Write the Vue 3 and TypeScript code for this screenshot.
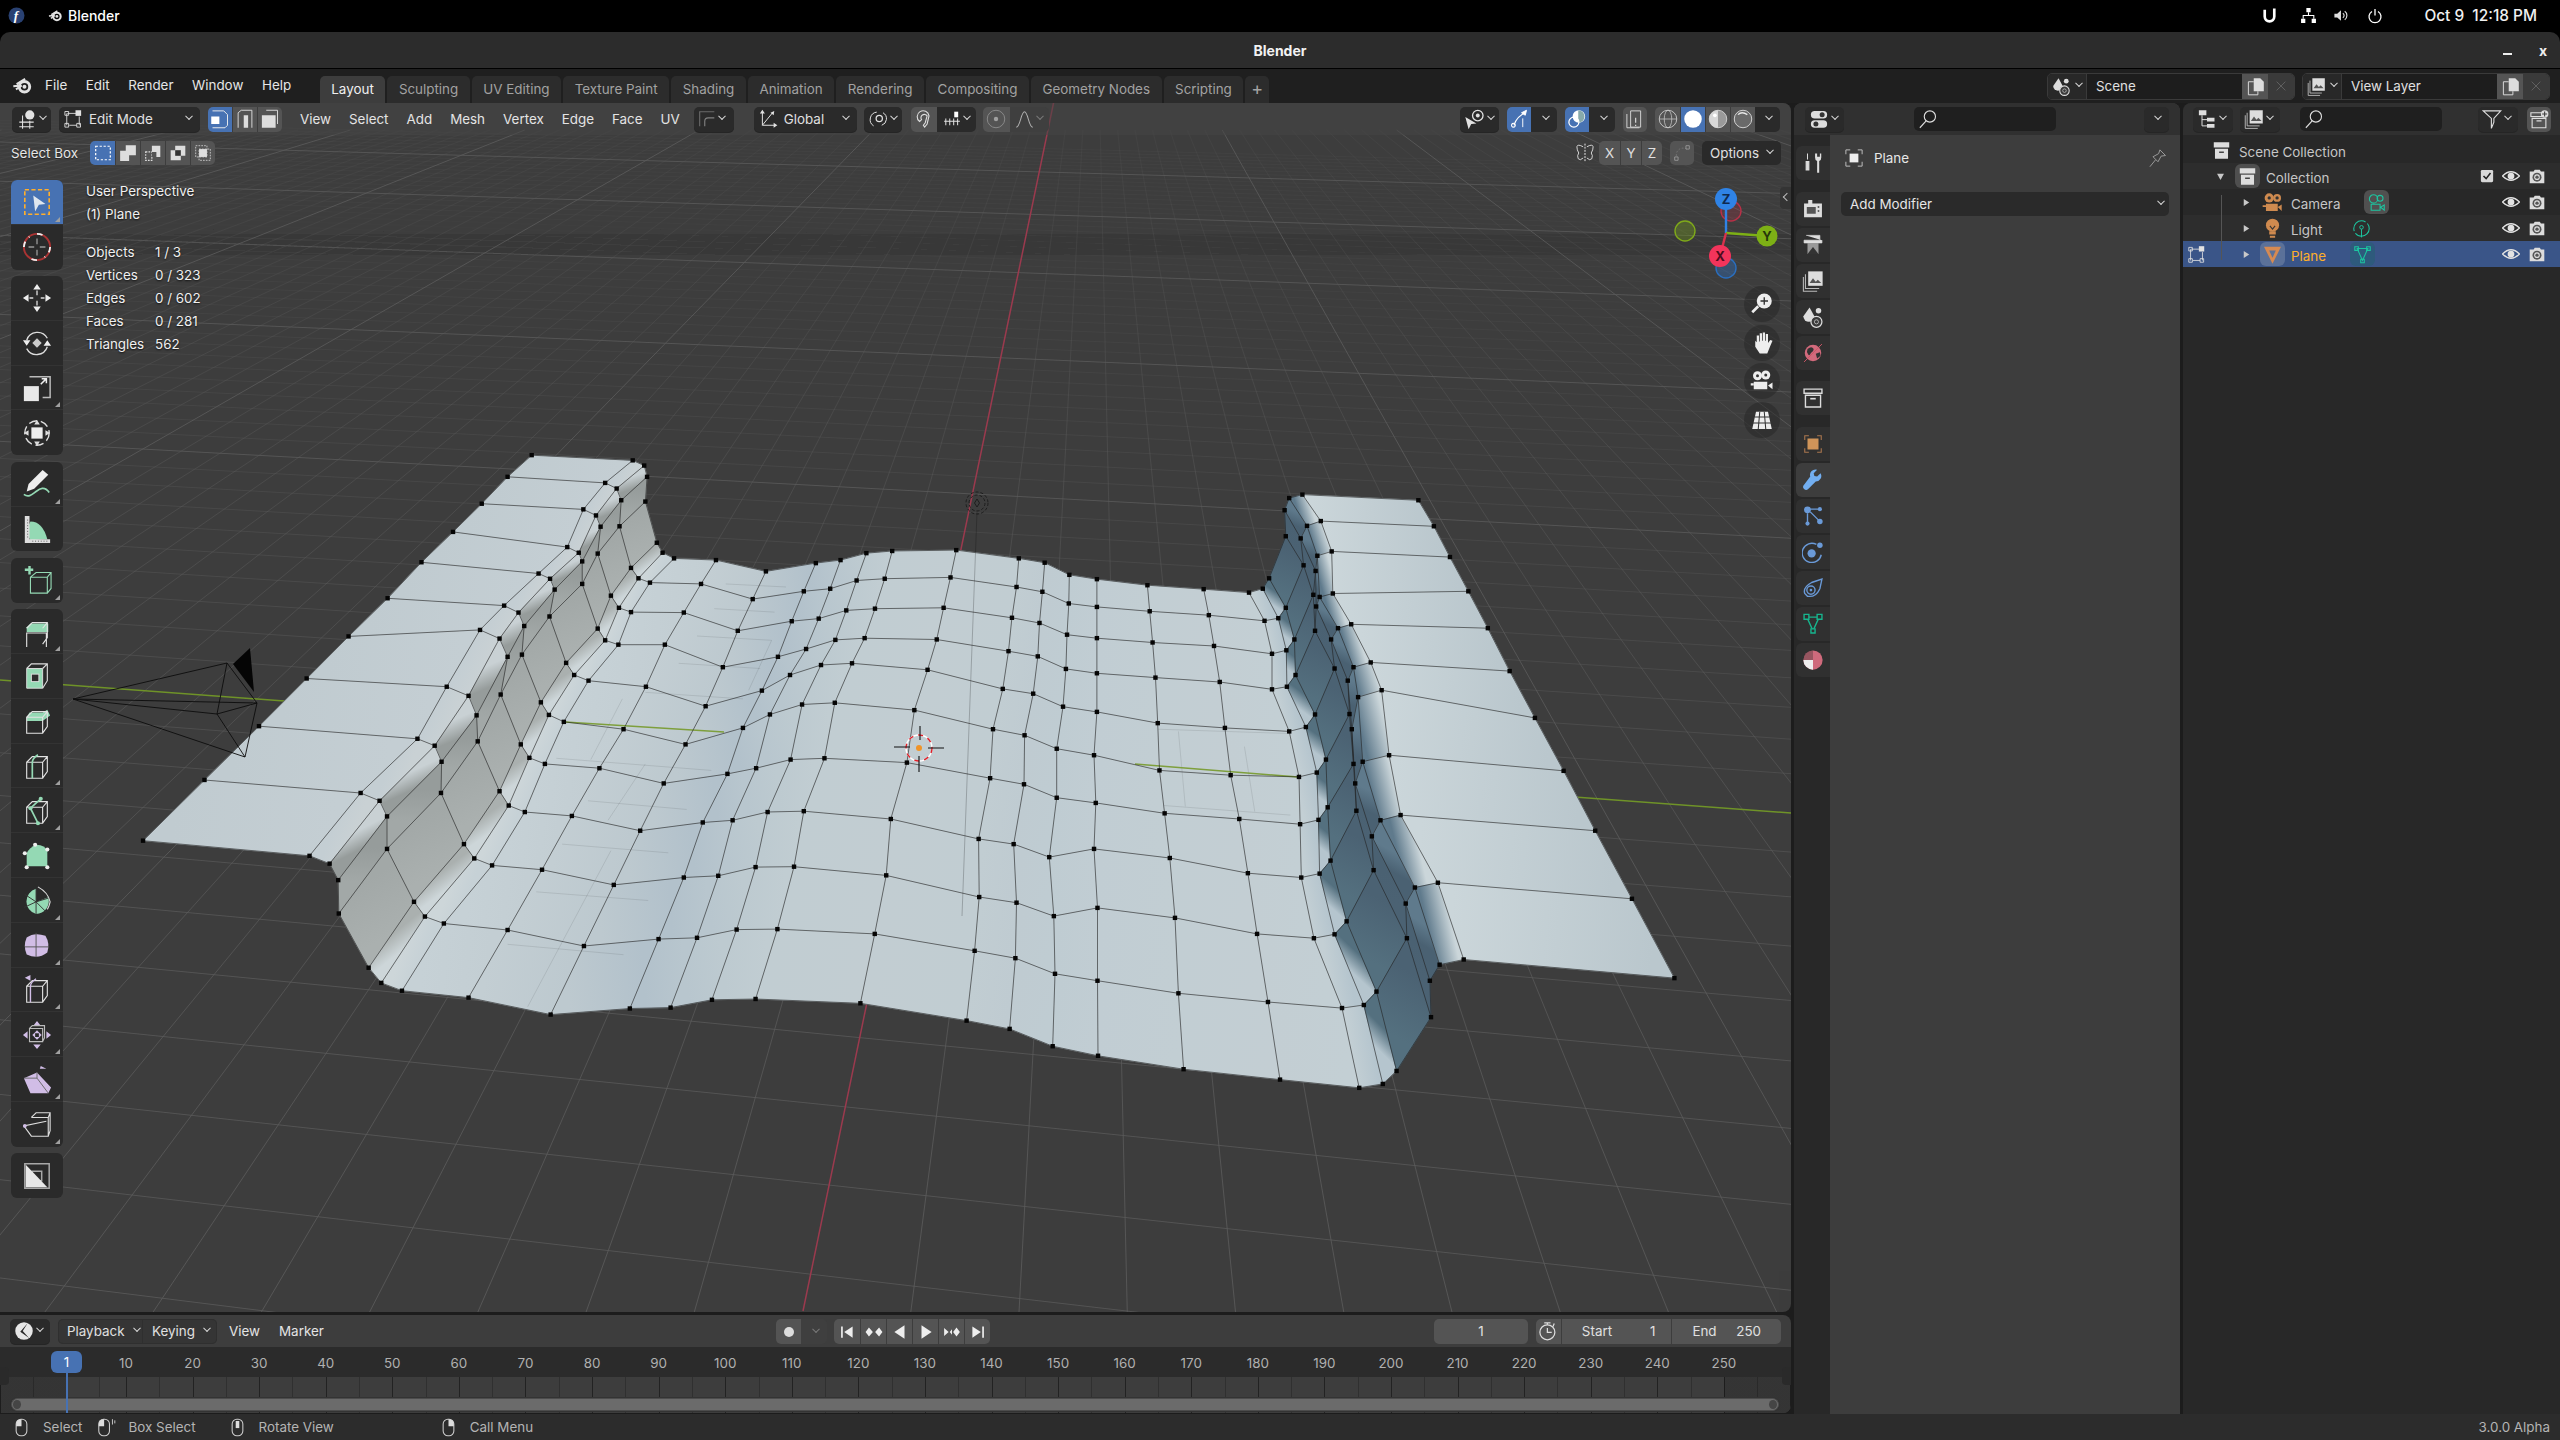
<script setup lang="ts">
import { h } from 'vue'

type P = { n: string; s?: number }

const W = '#e2e2e2'
const G = '#94d9b4'
const V = '#d1bde6'
const wire = (c = W) => `<path d="M5 12h17v17H5zM5 12l6-6h16v16l-5 7M22 12l5-6" fill="none" stroke="${c}" stroke-width="1.2"/>`

const icons: Record<string, string> = {
  fedora: `<circle cx="16" cy="16" r="15" fill="#294172"/><text x="11" y="25" font-family="Liberation Serif" font-style="italic" font-weight="700" font-size="25" fill="#fff">f</text>`,
  blender: `<circle cx="19" cy="18" r="8" fill="none" stroke="${W}" stroke-width="4.5"/><circle cx="19" cy="18" r="3" fill="${W}"/><path d="M2 17l11-1M6 22l9-6M20 6L7 14" stroke="${W}" stroke-width="3"/>`,
  ubi: `<path d="M7 5v13a9 9 0 0 0 18 0V3" fill="none" stroke="#fff" stroke-width="5"/>`,
  net: `<path d="M12 2h8v8h-8zM2 22h8v8H2zM22 22h8v8h-8z" fill="#fff"/><path d="M16 10v6M6 22v-6h20v6" stroke="#fff" stroke-width="2" fill="none"/>`,
  vol: `<path d="M3 12h6l8-7v22l-8-7H3z" fill="#ddd"/><path d="M21 11a6 6 0 0 1 0 10M25 7a11 11 0 0 1 0 18" fill="none" stroke="#ddd" stroke-width="2.5"/>`,
  power: `<path d="M10 7a12 12 0 1 0 12 0" fill="none" stroke="#fff" stroke-width="2.6"/><path d="M16 2v13" stroke="#fff" stroke-width="2.6"/>`,
  view3d: `<circle cx="21" cy="9" r="7" fill="${W}"/><path d="M10 10v20M5 20h22M5 27h22M21 18v12" stroke="${W}" stroke-width="1.6" fill="none"/>`,
  editmode: `<rect x="20" y="2" width="9" height="9" fill="${W}"/><path d="M7 7h14M6 7v19M26 12v14M10 26h12" stroke="${W}" stroke-width="1.4"/><path d="M3 4h6v6H3zM3 23h6v6H3zM22 23h6v6h-6z" fill="none" stroke="${W}" stroke-width="1.4"/>`,
  svert: `<path d="M4 3h18l6 6v17l-4 4H4" fill="none" stroke="#eee" stroke-width="1.5"/><rect x="2" y="12" width="13" height="12" fill="#fff"/>`,
  sedge: `<path d="M5 30V6l5-4h17v28" fill="none" stroke="#ddd" stroke-width="1.5"/><rect x="14" y="10" width="7" height="20" fill="#ddd"/>`,
  sface: `<path d="M10 2h18v22" fill="none" stroke="#ddd" stroke-width="1.5"/><path d="M3 10h22v20H3z" fill="#ddd"/>`,
  uv: `<path d="M3 29V3h26" fill="none" stroke="#6a6a6a" stroke-width="2"/><path d="M12 29V20q0-6 6-6h11" fill="none" stroke="#808080" stroke-width="2"/>`,
  global: `<path d="M7 4v22h20M7 26L24 5" fill="none" stroke="${W}" stroke-width="1.6"/><path d="M7 1l4 6H3zM31 26l-6 4v-8zM26 3l-1 7-5-4z" fill="${W}"/>`,
  pivot: `<circle cx="18" cy="15" r="5" fill="none" stroke="${W}" stroke-width="2"/><path d="M24 6a11 11 0 0 1-2 20M9 27A12 12 0 0 1 14 5" fill="none" stroke="${W}" stroke-width="1.6"/>`,
  snap: `<path d="M9 20A9.5 9.5 0 1 1 24 11L21 24l-4 5-2-3 3-4 3-11a5 5 0 1 0-9 6z" fill="none" stroke="#ddd" stroke-width="1.8"/>`,
  snapinc: `<rect x="20" y="3" width="7" height="10" fill="#fff"/><path d="M2 20h28M5 15v12M12 15v12M19 15v12M26 15v12" stroke="${W}" stroke-width="1.8"/>`,
  prop: `<circle cx="16" cy="16" r="14" fill="none" stroke="#8c8c8c" stroke-width="1.5"/><circle cx="16" cy="16" r="3.5" fill="#a0a0a0"/>`,
  fall: `<path d="M2 29C9 29 10 3 16 3s7 26 14 26" fill="none" stroke="#b0b0b0" stroke-width="1.7"/>`,
  selset: `<path d="M3 4h26v24H3z" fill="none" stroke="#fff" stroke-width="2.2" stroke-dasharray="4 3"/>`,
  selext: `<path d="M12 2h18v18H18v10H2V12h10z" fill="#ddd"/>`,
  selsub: `<path d="M3 14h11v15H3z" fill="none" stroke="#ddd" stroke-width="2" stroke-dasharray="3 2"/><path d="M14 3h15v20H14z" fill="#ddd"/><path d="M14 14h8v9h-8z" fill="#545454"/>`,
  seldif: `<path d="M11 3h18v18H11zM3 11h18v18H3z" fill="#ddd"/><rect x="11" y="11" width="10" height="10" fill="#333"/>`,
  selint: `<path d="M3 3h20v20H3zM9 9h20v20H9z" fill="none" stroke="#ccc" stroke-width="1.6" stroke-dasharray="3 2"/><rect x="9" y="9" width="14" height="14" fill="#ddd"/>`,
  view: `<circle cx="21" cy="10" r="8" fill="none" stroke="${W}" stroke-width="2"/><circle cx="21" cy="10" r="3" fill="${W}"/><path d="M2 12l5 19 4-8 8-1z" fill="${W}"/>`,
  gizmo: `<path d="M8 26Q12 12 26 6M7 23a3 3 0 1 0 .1 0" fill="none" stroke="#fff" stroke-width="1.8"/><path d="M28 2l-2 8-6-4zM22 15v14" stroke="#fff" fill="#fff" stroke-width="1.5"/>`,
  overlay: `<circle cx="19" cy="12" r="10" fill="#fff"/><path d="M18 2a10 10 0 0 1 0 20z" fill="#8aa"/><circle cx="11" cy="21" r="8" fill="none" stroke="#fff" stroke-width="2"/>`,
  xray: `<path d="M9 3h16v26H9z" fill="none" stroke="#d0d0d0" stroke-width="1.6"/><path d="M3 8v22h20" fill="none" stroke="#d0d0d0" stroke-width="1.6"/><path d="M17 14v8M17 25v2" stroke="#d0d0d0" stroke-width="2"/>`,
  wire: `<circle cx="16" cy="16" r="14" fill="none" stroke="#c8c8c8" stroke-width="1.5"/><ellipse cx="16" cy="16" rx="6" ry="14" fill="none" stroke="#c8c8c8" stroke-width="1.2"/><path d="M2 16h28" stroke="#c8c8c8" stroke-width="1.2"/>`,
  solid: `<circle cx="16" cy="16" r="14" fill="#fff"/>`,
  matprev: `<circle cx="16" cy="16" r="14" fill="#9a9a9a" stroke="#d0d0d0" stroke-width="1.5"/><path d="M16 2a14 14 0 0 0 0 28z" fill="#d8d8d8"/><circle cx="11" cy="10" r="3" fill="#fff"/>`,
  render: `<circle cx="16" cy="16" r="14" fill="#6a6a6a" stroke="#d8d8d8" stroke-width="1.5"/><path d="M8 9q6-6 15 0" fill="none" stroke="#e8e8e8" stroke-width="2"/>`,
  mirror: `<path d="M16 1v30" stroke="#e8e8e8" stroke-dasharray="3 2" stroke-width="1.6"/><path d="M13 6Q4 1 3 6q0 5 3 10-3 4-1 9 3 4 8-1M19 6q9-5 10 0 0 5-3 10 3 4 1 9-3 4-8-1" fill="none" stroke="#ddd" stroke-width="1.5"/>`,
  falloff: `<path d="M6 21A12 12 0 0 1 24 9" fill="none" stroke="#7a7a7a" stroke-width="1.5" stroke-dasharray="3 3"/><path d="M23 3h6v6h-6zM3 23h6v6H3z" fill="none" stroke="#999" stroke-width="1.6"/>`,
  select: `<path d="M3 3h26v26H3z" fill="none" stroke="#ffae2b" stroke-width="1.7" stroke-dasharray="4.5 2.5"/><path d="M12 9l13 9-7 1-4 7z" fill="#dfe6ee"/>`,
  cursor: `<circle cx="16" cy="16" r="14" fill="none" stroke="#a33" stroke-width="2"/><path d="M16 2a14 14 0 0 1 10 4M30 16a14 14 0 0 1-6 11M16 30a14 14 0 0 1-10-4M2 16a14 14 0 0 1 6-11" fill="none" stroke="#eee" stroke-width="2" stroke-dasharray="6 6"/><path d="M16 7v6M16 19v6M7 16h6M19 16h6" stroke="#999" stroke-width="1.4"/>`,
  move: `<path d="M16 1l4 6h-8zM16 31l-4-6h8zM1 16l6-4v8zM31 16l-6 4v-8z" fill="#eee"/><path d="M16 8v5M16 19v5M8 16h4M20 16h4" stroke="#ddd" stroke-width="1.4"/>`,
  rotate: `<path d="M16 11l5 5-5 5-5-5z" fill="#ccc"/><path d="M5 13A12 12 0 0 1 27 11M27 20A12 12 0 0 1 5 22" fill="none" stroke="#ddd" stroke-width="1.4"/><path d="M1 13h8l-4 6zM31 19h-8l4-6z" fill="#eee"/>`,
  scale: `<path d="M8 4h22v22H22" fill="none" stroke="#bbb" stroke-width="1.6"/><rect x="2" y="14" width="16" height="16" fill="#e8e8e8"/><path d="M20 12l6-6M21 6h5v5" stroke="#eee" stroke-width="1.6" fill="none"/>`,
  transform: `<circle cx="16" cy="16" r="13" fill="none" stroke="#ddd" stroke-width="1.5" stroke-dasharray="9 4"/><rect x="10" y="10" width="12" height="12" fill="#eee"/><path d="M16 2l3 5h-6zM16 30l-3-5h6zM2 16l5-3v6zM30 16l-5 3v-6z" fill="#ddd"/>`,
  annotate: `<path d="M22 1l6 5-15 15-8 3 2-8z" fill="#eee"/><path d="M2 27c5 4 9 0 13-3s9-6 14 1" fill="none" stroke="${G}" stroke-width="1.8"/>`,
  measure: `<path d="M9 28A18 18 0 0 1 9 8v0q13 0 18 19z" fill="${G}"/><path d="M3 2h5v25h22v4H3z" fill="#ddd"/><path d="M11 29h18M6 6v20" stroke="#555" stroke-dasharray="1 2"/>`,
  addcube: `<path d="M8 1v9M3 5h9" stroke="${G}" stroke-width="2.6"/><path d="M9 13h18v17H9zM9 13l6-5h16v17l-4 5M27 13l4-5" fill="none" stroke="${G}" stroke-width="1.2"/>`,
  extrude: `<path d="M5 11l4-4h19v9H5z" fill="${G}"/>${wire().replace('M5 12h17', 'M5 17h21')}`,
  inset: `<path d="M5 8h17v21H5z" fill="${G}"/><rect x="10" y="14" width="8" height="8" fill="#2e2e2e" stroke="#ddd"/><path d="M5 8l5-5h17v18l-5 8M22 8l5-5" fill="none" stroke="#ddd" stroke-width="1.2"/><path d="M5 8h17v21H5z" fill="none" stroke="#ddd" stroke-width="1"/>`,
  bevel: `<path d="M5 12l3-5h14l5-3 3 6-8 6H5z" fill="${G}"/>${wire()}`,
  loopcut: `${wire()}<path d="M11 29V12q0-4 6-8" fill="none" stroke="${G}" stroke-width="1.8"/>`,
  knife: `${wire()}<path d="M20 3l-11 10 8 16" fill="none" stroke="${G}" stroke-width="1.8"/><circle cx="20" cy="3" r="2.2" fill="${G}"/><circle cx="9" cy="13" r="2.2" fill="${G}"/><circle cx="17" cy="29" r="2.2" fill="${G}"/>`,
  polybuild: `<path d="M5 27V13q3-6 10-9 10 0 12 7v16z" fill="${G}"/><circle cx="5" cy="28" r="2.2" fill="#eee"/><circle cx="27" cy="28" r="2.2" fill="#eee"/><circle cx="3" cy="13" r="2.2" fill="#eee"/><circle cx="14" cy="4" r="2.2" fill="#eee"/><circle cx="27" cy="9" r="2.2" fill="#eee"/>`,
  spin: `<path d="M15 18L15 4A14 14 0 0 0 15 31a14 14 0 0 0 13-18z" fill="${G}"/><path d="M15 4v14M15 18L3 10M15 18L2 24M15 18L15 31M15 18l11 11M15 18l13-4" stroke="#333" stroke-width="1"/><path d="M17 2q11 6 13 16-1 5-3 8" fill="none" stroke="#ddd" stroke-width="1.2"/>`,
  smooth: `<path d="M5 8q8-6 20-2 5 8 2 18-10 8-22 2-4-9 0-18z" fill="${V}"/><path d="M3 18h26M15 3v26" stroke="#555" stroke-width="1"/>`,
  edgeslide: `<path d="M3 3l6-3v6z" fill="${V}"/>${wire()}<path d="M9 29V12q0-4 6-8" fill="none" stroke="${V}" stroke-width="1.5"/>`,
  shrink: `<path d="M16 1l4 5h-8zM16 31l-4-5h8zM1 16l5-4v8zM31 16l-5 4v-8zM11 16l3-3v6zM21 16l-3 3v-6zM16 11l3 3h-6zM16 21l-3-3h6z" fill="${V}"/><path d="M8 9h14v14H8zM8 9l3-3h13v13l-2 4" fill="none" stroke="#bbb" stroke-width="1.2"/>`,
  shear: `<path d="M26 4l-7-0 1-3zM2 14l14-6 15 16-3 6H9z" fill="${V}"/><path d="M2 14h14l12 16M16 8v6" stroke="#666" stroke-width="1" fill="none"/>`,
  rip: `<path d="M10 9h18v20H10L2 18l24-5M10 9l5-5h15v19l-2 6M28 9l2-5" fill="none" stroke="#ddd" stroke-width="1.2"/><circle cx="3" cy="18" r="2" fill="${V}"/>`,
  bottom: `<path d="M3 3h26v26H3zM11 11h10v10H11z" fill="none" stroke="#a8a8a8" stroke-width="1.6"/><path d="M4 4l23 24H4z" fill="#e8e8e8"/>`,
  zoom: `<circle cx="19" cy="12" r="10" fill="#eee"/><path d="M19 7v10M14 12h10" stroke="#333" stroke-width="1.8"/><path d="M11 19L3 27" stroke="#eee" stroke-width="3.5"/>`,
  hand: `<path d="M7 13v8l6 9h10l4-10 3-7-3-1-3 4V4h-3v9h-1V2h-3v11h-1V3h-3v11h-1V6H9v9z" fill="#eee"/>`,
  camera: `<circle cx="10" cy="9" r="6" fill="#eee"/><circle cx="21" cy="8" r="6" fill="#eee"/><path d="M5 17h18v10H5zM24 22l6-4v9z" fill="#eee"/><path d="M1 19h4v3H1z" fill="#eee"/><circle cx="10" cy="9" r="2" fill="#333"/><circle cx="21" cy="8" r="2" fill="#333"/>`,
  persp: `<path d="M8 5h16l5 23H3z" fill="#eee"/><path d="M13 5l-2 23M19 5l2 23M6 12h20M4 20h24" stroke="#333" stroke-width="1.4"/>`,
  tool: `<path d="M8 2v9M6 14h4v12H6z" stroke="#ddd" fill="#ddd" stroke-width="1.5"/><path d="M19 2v6a5 5 0 0 0 3 5v17h3V13a5 5 0 0 0 3-5V2h-2v5h-4V2z" fill="#ddd"/>`,
  prender: `<path d="M3 8h26v20H3zM9 3h6v5H9z" fill="#ddd"/><path d="M7 13h13v10H7z" fill="#555"/><circle cx="24" cy="13" r="1.4" fill="#555"/><circle cx="24" cy="19" r="1.4" fill="#555"/>`,
  output: `<path d="M6 2h20v7H3v4h26V9" fill="#ddd" stroke="#ddd"/><path d="M8 13h16v16H8z" fill="#999"/><path d="M8 29l8-10 8 10z" fill="#333"/>`,
  layer: `<path d="M9 2h21v21H9z" fill="#ddd"/><path d="M11 19l5-7 4 5 3-3 5 5z" fill="#555"/><path d="M5 6v21h20M2 10v21h20" fill="none" stroke="#bbb" stroke-width="1.5"/>`,
  scene: `<path d="M11 2l7 13a8 8 0 0 1-16 0z" fill="#ddd"/><circle cx="24" cy="7" r="4" fill="#ddd"/><circle cx="21" cy="23" r="8" fill="#3a3a3a" stroke="#ddd" stroke-width="1.8"/><circle cx="21" cy="23" r="3" fill="none" stroke="#ddd"/>`,
  world: `<circle cx="16" cy="16" r="12" fill="#d26a7c"/><path d="M8 10q6-5 9 0 0 4-4 6-2 5-4 2-3-4-1-8zM20 17l6-2 1 5-5 4z" fill="#333"/><path d="M29 3L3 29" stroke="#c56" stroke-width="1.4"/>`,
  coll: `<path d="M3 3h26v6H3zM5 12h22v17H5z" fill="none" stroke="#ddd" stroke-width="2"/><path d="M12 17h8" stroke="#ddd" stroke-width="2.4"/>`,
  object: `<path d="M4 10V4h6M22 4h6v6M28 22v6h-6M10 28H4v-6" fill="none" stroke="#a8754e" stroke-width="1.6"/><rect x="8" y="8" width="16" height="16" fill="#cf9459"/>`,
  wrench: `<path d="M27 6l-5 5-4-1-1-4 5-5A8 8 0 0 0 12 11L3 23a4 4 0 0 0 6 6L20 18a8 8 0 0 0 7-12z" fill="#72aef0"/>`,
  particles: `<circle cx="8" cy="7" r="5" fill="#6a9ad8"/><path d="M12 6h12M8 12v13M12 10l12 12" stroke="#6a9ad8" stroke-width="2"/><circle cx="26" cy="6" r="3" fill="#6a9ad8"/><circle cx="8" cy="27" r="3" fill="#6a9ad8"/><circle cx="26" cy="24" r="4" fill="#6a9ad8"/>`,
  physics: `<circle cx="14" cy="18" r="6" fill="#6a9ad8"/><circle cx="26" cy="6" r="4" fill="#6a9ad8"/><path d="M21 5A14 14 0 1 0 28 20" fill="none" stroke="#6a9ad8" stroke-width="2"/>`,
  constraint: `<path d="M4 24Q1 15 14 8l15-5-3 14Q20 30 8 28z" fill="none" stroke="#6a9ad8" stroke-width="2"/><circle cx="13" cy="19" r="6" fill="none" stroke="#6a9ad8" stroke-width="2"/><circle cx="13" cy="19" r="2" fill="#6a9ad8"/>`,
  data: `<path d="M7 6h18L16 26z" fill="none" stroke="#17b58e" stroke-width="2"/><path d="M3 2h7v7H3zM22 2h7v7h-7zM13 23h6v6h-6z" fill="#2e2e2e" stroke="#17b58e" stroke-width="2"/>`,
  material: `<circle cx="16" cy="16" r="14" fill="#cf6a7c"/><path d="M16 16v14A14 14 0 0 1 2 16z" fill="#eee"/><path d="M16 16V2A14 14 0 0 0 2 16z" fill="#2e2e2e" fill-opacity="0.35"/>`,
  swap: `<rect x="3" y="3" width="26" height="12" rx="6" fill="#ddd"/><rect x="3" y="18" width="26" height="12" rx="6" fill="#ddd"/><circle cx="21" cy="9" r="4" fill="#333"/><circle cx="11" cy="24" r="4" fill="#333"/>`,
  search: `<circle cx="19" cy="12" r="9" fill="none" stroke="#ddd" stroke-width="1.8"/><path d="M13 19L3 30" stroke="#ddd" stroke-width="1.8"/>`,
  planeobj: `<path d="M3 10V3h7M22 3h7v7M29 22v7h-7M10 29H3v-7" fill="none" stroke="#bbb" stroke-width="1.6"/><rect x="9" y="9" width="14" height="14" fill="#eee"/>`,
  pin: `<path d="M3 30l9-11M19 3l9 9-7 1-5 9-8-8 9-5z" fill="none" stroke="#999" stroke-width="1.6"/>`,
  outl: `<path d="M3 2h12v8H3zM16 14h12v6H16zM16 24h12v6H16z" fill="#ddd"/><path d="M8 10v17h8M8 17h8" stroke="#ddd" stroke-width="1.6" fill="none"/>`,
  filter: `<path d="M2 3h28L19 15v6l-4 10V15z" fill="none" stroke="#ddd" stroke-width="1.8"/>`,
  newcoll: `<path d="M3 6h18v6H3zM5 15h22v15H5z" fill="none" stroke="#ddd" stroke-width="1.8"/><circle cx="25" cy="8" r="6" fill="#ddd"/><path d="M25 4v8M21 8h8" stroke="#444" stroke-width="1.8"/><path d="M12 19h8" stroke="#ddd" stroke-width="2"/>`,
  copy: `<path d="M13 2h11l6 6v16H13z" fill="#ddd"/><path d="M4 8h9M4 8v22h16v-6" fill="none" stroke="#ddd" stroke-width="1.6"/>`,
  x: `<path d="M6 6l20 20M26 6L6 26" stroke="#6c6c6c" stroke-width="1.7"/>`,
  sccoll: `<path d="M3 2h26v9H3z" fill="#ddd"/><path d="M5 13h22v17H5z" fill="#ddd"/><path d="M12 19h8" stroke="#444" stroke-width="2.4"/>`,
  eye: `<path d="M1 16Q16 1 31 16 16 31 1 16z" fill="none" stroke="#e2e2e2" stroke-width="2.4"/><circle cx="16" cy="16" r="6" fill="#e2e2e2"/>`,
  cam: `<path d="M3 8h7l2-3h9l2 3h6v21H3z" fill="#dcdcdc"/><circle cx="16" cy="18" r="8" fill="#555"/><circle cx="16" cy="18" r="5" fill="#dcdcdc"/><circle cx="16" cy="18" r="3" fill="#555"/>`,
  check: `<rect x="2" y="2" width="28" height="28" rx="3" fill="#d8d8d8"/><path d="M8 16l6 6 10-13" fill="none" stroke="#222" stroke-width="3.6"/>`,
  ocam: `<circle cx="11" cy="9" r="7" fill="#cf8a4f"/><circle cx="23" cy="9" r="6" fill="#cf8a4f"/><path d="M6 18h18v11H6zM24 23l6-4v10zM1 20h5v3H1z" fill="#cf8a4f"/><circle cx="11" cy="9" r="2.5" fill="#333"/><circle cx="23" cy="9" r="2.5" fill="#333"/>`,
  olight: `<circle cx="16" cy="11" r="10" fill="#cf8a4f"/><path d="M11 20h10v5H11zM12 27h8v3h-8z" fill="#cf8a4f"/><path d="M12 12l4 5 4-5" fill="none" stroke="#333" stroke-width="1.6"/>`,
  oplane: `<path d="M3 4h26L16 30z" fill="#d68a52"/><path d="M11 10h10l-5 11z" fill="#5b7199"/>`,
  dcam: `<circle cx="11" cy="10" r="7" fill="none" stroke="#1cc5a0" stroke-width="1.8"/><circle cx="22" cy="9" r="5" fill="none" stroke="#1cc5a0" stroke-width="1.8"/><path d="M7 19h15v10H7zM23 24l6-4v9z" fill="none" stroke="#1cc5a0" stroke-width="1.8"/>`,
  dlight: `<circle cx="16" cy="16" r="13" fill="none" stroke="#1cc5a0" stroke-width="1.8" stroke-dasharray="32 4"/><circle cx="16" cy="14" r="3" fill="none" stroke="#1cc5a0" stroke-width="1.6"/><path d="M16 17v14" stroke="#1cc5a0" stroke-width="1.6"/>`,
  dplane: `<path d="M7 6h18L16 26z" fill="none" stroke="#1cc5a0" stroke-width="1.8"/><path d="M3 3h6v6H3zM23 3h6v6h-6zM13 24h6v6h-6z" fill="none" stroke="#1cc5a0" stroke-width="1.8"/>`,
  arrowr: `<path d="M8 6l16 10-16 10z" fill="#c8c8c8"/>`,
  arrowd: `<path d="M6 8h20L16 26z" fill="#c8c8c8"/>`,
  timeline: `<circle cx="16" cy="16" r="14" fill="#e6e6e6"/><path d="M22 3L14 16l10 11-14-10z" fill="#2a2a2a"/>`,
  record: `<circle cx="16" cy="16" r="8" fill="#ddd"/>`,
  jfirst: `<path d="M7 6v20" stroke="#eee" stroke-width="3"/><path d="M26 6v20L11 16z" fill="#eee"/>`,
  jprev: `<path d="M14 16l-7-8-6 8 6 8zM18 16l7-8 6 8-6 8z" fill="#eee"/>`,
  rev: `<path d="M24 4v24L6 16z" fill="#eee"/>`,
  play: `<path d="M8 4v24l18-12z" fill="#eee"/>`,
  jnext: `<path d="M2 9v14l8-7zM18 16l6-8 6 8-6 8z M12 16l4-5v10z" fill="#eee"/>`,
  jlast: `<path d="M25 6v20" stroke="#eee" stroke-width="3"/><path d="M6 6v20l15-10z" fill="#eee"/>`,
  stopwatch: `<circle cx="15" cy="18" r="12" fill="none" stroke="#ddd" stroke-width="2"/><path d="M15 11v7h7M10 3h10M15 3v3M26 4l-2 5" fill="none" stroke="#ddd" stroke-width="2"/>`,
  mL: `<rect x="7" y="2" width="18" height="28" rx="8" fill="none" stroke="#ccc" stroke-width="1.8"/><path d="M16 2H15a8 8 0 0 0-8 8v4h9z" fill="#ddd"/>`,
  mM: `<rect x="7" y="2" width="18" height="28" rx="8" fill="none" stroke="#ccc" stroke-width="1.8"/><rect x="13" y="5" width="6" height="12" fill="#ddd"/>`,
  mR: `<rect x="7" y="2" width="18" height="28" rx="8" fill="none" stroke="#ccc" stroke-width="1.8"/><path d="M16 2h1a8 8 0 0 1 8 8v4h-9z" fill="#ddd"/>`,
  mD: `<rect x="3" y="2" width="18" height="28" rx="8" fill="none" stroke="#ccc" stroke-width="1.8"/><path d="M12 2h-1a8 8 0 0 0-8 8v4h9z" fill="#ddd"/><path d="M26 2v9M30 4v5" stroke="#ccc" stroke-width="1.6"/>`
}

// svg icons live in one table so the template only names them
const Ico = (p: P) =>
  h('svg', { class: 'ico', width: p.s ?? 20, height: p.s ?? 20, viewBox: '0 0 32 32', innerHTML: icons[p.n] })

const menus = ['File', 'Edit', 'Render', 'Window', 'Help']
const workspaces = ['Layout', 'Sculpting', 'UV Editing', 'Texture Paint', 'Shading', 'Animation', 'Rendering', 'Compositing', 'Geometry Nodes', 'Scripting']
const vpMenus = ['View', 'Select', 'Add', 'Mesh', 'Vertex', 'Edge', 'Face', 'UV']
const toolGroups = [
  [{ n: 'select', on: true, c: true }, { n: 'cursor' }],
  [{ n: 'move' }, { n: 'rotate' }, { n: 'scale', c: true }, { n: 'transform' }],
  [{ n: 'annotate', c: true }, { n: 'measure' }],
  [{ n: 'addcube', c: true }],
  [
    { n: 'extrude', c: true }, { n: 'inset' }, { n: 'bevel' }, { n: 'loopcut', c: true }, { n: 'knife', c: true },
    { n: 'polybuild' }, { n: 'spin', c: true }, { n: 'smooth', c: true }, { n: 'edgeslide', c: true },
    { n: 'shrink', c: true }, { n: 'shear', c: true }, { n: 'rip', c: true }
  ],
  [{ n: 'bottom' }]
]
const stats = [['Objects', '1 / 3'], ['Vertices', '0 / 323'], ['Edges', '0 / 602'], ['Faces', '0 / 281'], ['Triangles', '562']]
const tabGroups = [
  ['tool'],
  ['prender', 'output', 'layer', 'scene', 'world'],
  ['coll'],
  ['object', 'wrench', 'particles', 'physics', 'constraint', 'data', 'material']
]
const shading = ['wire', 'solid', 'matprev', 'render']
const navBtns = ['zoom', 'hand', 'camera', 'persp']
const outRows = [
  { name: 'Camera', icon: 'ocam', data: 'dcam', boxed: true, sel: false, alt: false },
  { name: 'Light', icon: 'olight', data: 'dlight', boxed: false, sel: false, alt: true },
  { name: 'Plane', icon: 'oplane', data: 'dplane', boxed: true, sel: true, alt: false }
]
const frames = Array.from({ length: 25 }, (_, i) => (i + 1) * 10)
const transport = ['jfirst', 'jprev', 'rev', 'play', 'jnext', 'jlast']

// mesh vertices traced off the reference: 11 rows, 29 columns
const leftCols = [
  [752,58,928,70,948,82,953,108,950,165,970,260,980,283,1000,296,1073,300,1160,326,1247,307,1290,300,1335,284,1380,279],
  [710,108,880,122,900,135,908,162,905,222,925,318,938,342,958,352,1047,355,1137,390,1226,372,1272,366,1318,347,1367,343],
  [665,170,842,183,864,197,872,223,867,285,890,382,904,410,925,420,1017,421,1111,463,1205,441,1252,435,1300,416,1350,412],
  [615,235,814,270,834,283,840,303,840,355,867,458,880,485,903,495,984,495,1085,547,1181,523,1230,505,1281,484,1332,480],
  [560,305,764,331,784,343,792,368,783,430,812,537,826,565,851,578,951,592,1055,637,1153,601,1202,565,1256,542,1310,538],
  [501,388,704,405,729,421,739,452,735,518,768,628,782,657,808,673,912,690,1020,725,1120,687,1167,656,1223,633,1280,629],
  [433,476,662,461,696,481,710,523,698,610,733,725,748,756,775,770,870,780,982,815,1093,793,1143,780,1203,760,1262,757],
  [360,573,604,592,642,613,656,658,658,718,696,833,712,866,740,881,822,890,941,924,1050,905,1102,900,1163,881,1226,879],
  [277,683,553,712,583,728,595,765,594,837,634,955,652,988,683,1004,770,1014,895,1049,1017,1032,1077,1028,1142,1008,1209,1007],
  [182,807,454,837,487,855,500,891,500,966,547,1088,566,1122,599,1138,710,1153,843,1190,973,1174,1040,1171,1109,1152,1180,1151],
  [75,947,365,982,400,1000,415,1038,416,1115,468,1240,490,1275,526,1293,642,1309,785,1348,923,1334,994,1332,1066,1314,1142,1312]
]
const rightCols = [
  [98,277,207,296,252,306,295,334,343,344,431,358,529,367,608,375,632,366,643,342,672,245,670,185,678,157,701,149,903,162],
  [88,340,203,362,248,373,294,400,343,408,435,418,538,427,635,440,659,434,672,410,703,312,698,250,709,221,733,210,930,222],
  [76,410,195,433,243,445,291,472,343,480,440,490,547,498,648,516,673,508,687,483,720,380,724,325,727,290,752,280,958,293],
  [64,483,189,510,240,522,289,551,343,561,445,571,557,581,648,598,674,592,689,565,723,463,725,407,731,385,754,377,990,372],
  [48,553,179,597,232,608,284,638,343,650,449,676,566,687,678,695,707,685,723,656,757,550,751,483,763,457,786,448,1024,457],
  [25,646,162,690,217,704,273,735,338,750,452,785,576,796,695,800,726,790,742,760,783,655,780,578,790,547,820,536,1062,556],
  [12,767,157,803,216,817,273,848,341,860,461,884,591,897,697,909,729,899,745,870,790,770,787,690,798,616,839,600,1106,664],
  [-16,897,137,943,198,955,260,985,338,966,470,987,606,1022,699,1032,731,1023,750,993,795,878,793,815,806,765,852,750,1156,786],
  [-24,1027,138,1077,203,1090,268,1121,344,1102,479,1125,622,1162,721,1172,757,1163,778,1133,825,1015,822,937,837,900,872,888,1211,924],
  [-44,1162,130,1201,201,1218,270,1254,344,1270,485,1299,641,1319,770,1333,808,1326,830,1295,883,1172,881,1092,897,1055,937,1044,1275,1081],
  [-69,1322,116,1362,191,1381,266,1421,345,1443,494,1474,662,1498,800,1517,841,1508,865,1478,925,1354,923,1270,940,1233,982,1221,1349,1264]
]
const colShade = [
  '#c0cbd0', '#c4ced3', '#c9d1d4', '#969c9b', '#a2a8a7', '#aab0af', '#cdd6d9', '#c6d1d6', '#c3ced3', '#bdc9cf',
  '#b2c1cb', '#b8c6ce', '#bdcad0', '#c1cdd2', '#c2cdd2', '#c1cdd2', '#bfcbd1', '#bfccd2', '#c1cdd3', '#c2ced3',
  '#c3ced3', '#c3cfd4', '#b5c5ce', '#54707f', '#4b6273', '#4a6172', '#5f7a8c', '#cbd6da', '#bac7cd'
]

type Pt = [number, number]
const mapPts = (row: number[], ox: number): Pt[] => {
  const out: Pt[] = []
  for (let i = 0; i < row.length; i += 2) out.push([ox + row[i] / 1.742, 430 + row[i + 1] / 2.306])
  return out
}
const verts: Pt[][] = leftCols.map((r, i) => [...mapPts(r, 100), ...mapPts(rightCols[i], 900)])
const line = (pts: Pt[]) => pts.map((p) => p[0].toFixed(1) + ',' + p[1].toFixed(1)).join(' ')

const quads: { id: string; pts: string; x1: number; y1: number; x2: number; y2: number; c1: string; c2: string }[] = []
for (let r = 0; r < 10; r++) {
  for (let c = 0; c < 28; c++) {
    const a = verts[r][c], b = verts[r][c + 1], d = verts[r + 1][c + 1], e = verts[r + 1][c]
    quads.push({
      id: `q${r}_${c}`,
      pts: line([a, b, d, e]),
      x1: (a[0] + e[0]) / 2, y1: (a[1] + e[1]) / 2,
      x2: (b[0] + d[0]) / 2, y2: (b[1] + d[1]) / 2,
      c1: colShade[c], c2: colShade[c + 1]
    })
  }
}
const rowLines = verts.map(line)
const colLines = verts[0].map((_, c) => line(verts.map((r) => r[c])))
const dots = verts.flat()

// ground grid: two vanishing points, every tenth line is a major one
const depthLines: { x1: number; y1: number; x2: number; y2: number; major: boolean }[] = []
for (let k = -70; k <= 50; k++) {
  if (k === 0) continue
  const bx = 804 + 107.7 * k
  const at = (y: number) => 1095 + ((bx - 1095) * (y + 97)) / 1402
  depthLines.push({ x1: at(130), y1: 130, x2: at(1315), y2: 1315, major: k % 10 === 0 })
}
const crossLines: { x1: number; y1: number; x2: number; y2: number; o: number }[] = []
for (let n = -4; n <= 66; n++) {
  if (n === 9) continue
  const y = -105 + 1 / (0.000774 + 0.000055 * n)
  const s = (y + 198) / (63 + 11815)
  const major = (n + 1) % 10 === 0
  const fade = Math.max(0.16, Math.min(0.8, (y - 60) / 1100))
  crossLines.push({ x1: 0, y1: y - 63 * s, x2: 1795, y2: y + (1795 - 63) * s, o: major ? 0.85 : fade })
}
// grid showing faintly through the surface
const ghost = [
  [1090,355,1195,362,0],[1070,412,1175,420,0],[1040,475,1170,485,0],[1008,538,1150,550,0],[950,605,1120,620,0],
  [795,757,1065,785,0],[850,855,1022,875,0],[805,955,990,975,0],[760,1065,955,1085,0],[710,1186,912,1210,0],
  [1170,485,1130,600,0],[910,620,855,760,0],[950,770,885,900,0],[890,970,745,1330,0],
  [450,690,680,700,1],[485,695,497,868,1],[600,730,618,880,1],[460,866,680,888,1]
].map(([a, b, c, d, right]) => {
  const ox = right ? 900 : 100
  return { x1: ox + a / 1.742, y1: 430 + b / 2.306, x2: ox + c / 1.742, y2: 430 + d / 2.306 }
})
</script>

<template>
  <div class="screen">
    <div class="sysbar">
      <Ico n="fedora" :s="17" />
      <Ico class="sys-logo" n="blender" :s="15" />
      <span class="sys-app">Blender</span>
      <div class="tray">
        <Ico n="ubi" :s="17" />
        <Ico n="net" :s="17" />
        <Ico n="vol" :s="15" />
        <Ico n="power" :s="16" />
        <span class="clock">Oct 9&nbsp;&nbsp;12:18 PM</span>
      </div>
    </div>

    <div class="titlebar">
      <span class="title">Blender</span>
      <span class="win-btns"><i class="min"></i><b>x</b></span>
    </div>

    <div class="topbar">
      <Ico class="bl-logo" n="blender" :s="21" />
      <span v-for="m in menus" :key="m" class="top-menu">{{ m }}</span>
      <div class="tabs">
        <span v-for="(w, i) in workspaces" :key="w" class="tab" :class="{ on: i === 0 }">{{ w }}</span>
        <span class="tab plus">+</span>
      </div>
      <div class="scene-fields">
        <div class="idfield">
          <span class="id-ic"><Ico n="scene" :s="19" /><i class="chev"></i></span>
          <span class="id-name">Scene</span>
          <span class="id-copy"><Ico n="copy" :s="19" /></span>
          <span class="id-x"><Ico n="x" :s="14" /></span>
        </div>
        <div class="idfield">
          <span class="id-ic"><Ico n="layer" :s="19" /><i class="chev"></i></span>
          <span class="id-name">View Layer</span>
          <span class="id-copy"><Ico n="copy" :s="19" /></span>
          <span class="id-x"><Ico n="x" :s="14" /></span>
        </div>
      </div>
    </div>

    <div class="work">
      <div class="left">
        <div class="viewport">
          <svg class="scene" viewBox="0 103 1791 1209" preserveAspectRatio="none">
            <defs>
              <linearGradient id="gridMinor" gradientUnits="userSpaceOnUse" x1="0" y1="130" x2="0" y2="1200">
                <stop offset="0" stop-color="#5a5a5a" stop-opacity="0.18" />
                <stop offset="0.3" stop-color="#5a5a5a" stop-opacity="0.45" />
                <stop offset="1" stop-color="#5a5a5a" stop-opacity="0.85" />
              </linearGradient>
              <linearGradient v-for="q in quads" :id="q.id" :key="q.id" gradientUnits="userSpaceOnUse" :x1="q.x1" :y1="q.y1" :x2="q.x2" :y2="q.y2">
                <stop offset="0" :stop-color="q.c1" />
                <stop offset="1" :stop-color="q.c2" />
              </linearGradient>
            </defs>
            <line v-for="(g, i) in crossLines" :key="i" :x1="g.x1" :y1="g.y1" :x2="g.x2" :y2="g.y2" stroke="#5a5a5a" stroke-width="1" :opacity="g.o" />
            <line v-for="(g, i) in depthLines" :key="i" :x1="g.x1" :y1="g.y1" :x2="g.x2" :y2="g.y2" :stroke="g.major ? '#5a5a5a' : 'url(#gridMinor)'" :stroke-opacity="g.major ? 0.85 : 1" stroke-width="1" />
            <line x1="0" y1="680" x2="1791" y2="813" stroke="#6f9328" stroke-width="1.5" />
            <line x1="1095" y1="-97" x2="803" y2="1311" stroke="#9b3a4e" stroke-width="1.5" />
            <!-- surface -->
            <polygon v-for="q in quads" :key="q.id" :points="q.pts" :fill="`url(#${q.id})`" :stroke="`url(#${q.id})`" stroke-width="0.7" />
            <line v-for="(g, i) in ghost" :key="i" :x1="g.x1" :y1="g.y1" :x2="g.x2" :y2="g.y2" stroke="#000" stroke-opacity="0.09" stroke-width="1" />
            <line x1="565" y1="722" x2="724" y2="732" stroke="#7e9f3c" stroke-width="1.4" />
            <line x1="1135" y1="764" x2="1298" y2="777" stroke="#7e9f3c" stroke-width="1.4" />
            <line x1="977" y1="512" x2="962" y2="916" stroke="#000" stroke-opacity="0.22" />
            <polyline v-for="(l, i) in rowLines" :key="i" :points="l" fill="none" stroke="#222" stroke-width="0.8" stroke-opacity="0.75" />
            <polyline v-for="(l, i) in colLines" :key="i" :points="l" fill="none" stroke="#222" stroke-width="0.8" stroke-opacity="0.75" />
            <rect v-for="(d, i) in dots" :key="i" :x="d[0] - 2.2" :y="d[1] - 2.2" width="4.4" height="4.4" fill="#050505" />
            <!-- camera -->
            <g fill="none" stroke="#0c0c0c" stroke-width="0.9">
              <path d="M73 699L227 663L257 703L245 757L217 714L227 663M257 703L73 699L245 757M73 699L217 714M217 714L257 703" />
            </g>
            <path d="M250 648L233 664L254 692Z" fill="#050505" />
            <!-- light -->
            <g fill="none" stroke="#1a1a1a" stroke-width="0.9">
              <circle cx="977" cy="503" r="11" stroke-dasharray="3 2" />
              <circle cx="977" cy="503" r="8" stroke-dasharray="3 2" />
              <path d="M977 499l2.5 4-2.5 4-2.5-4z" />
            </g>
            <!-- 3d cursor -->
            <g>
              <circle cx="919" cy="748" r="13" fill="none" stroke="#fff" stroke-width="1.4" />
              <circle cx="919" cy="748" r="13" fill="none" stroke="#e0202a" stroke-width="1.4" stroke-dasharray="5 5" />
              <path d="M894 747h16M928 748h16M920 726v14M919 756v16" stroke="#111" stroke-width="1.1" />
              <circle cx="919" cy="748" r="3" fill="#f09428" />
            </g>
            <!-- orientation gizmo -->
            <g font-family="Inter, sans-serif" font-size="13" font-weight="700" text-anchor="middle">
              <circle cx="1731" cy="211" r="10" fill="#d8324c" fill-opacity="0.2" stroke="#b93047" stroke-width="1.4" />
              <circle cx="1685" cy="231" r="10" fill="#7db015" fill-opacity="0.3" stroke="#7fa91a" stroke-width="1.4" />
              <circle cx="1726" cy="268" r="10" fill="#2a7ee6" fill-opacity="0.3" stroke="#2a6fc0" stroke-width="1.4" />
              <path d="M1726 233V205" stroke="#2f83e6" stroke-width="2.4" />
              <path d="M1726 233L1767 236" stroke="#7db015" stroke-width="2.4" />
              <path d="M1726 233L1720 256" stroke="#d8324c" stroke-width="2.4" />
              <circle cx="1726" cy="199" r="11" fill="#2f83e6" />
              <circle cx="1767" cy="236" r="10.5" fill="#7db015" />
              <circle cx="1720" cy="256" r="11" fill="#f2345b" />
              <text x="1726" y="204" fill="#0e2a50">Z</text>
              <text x="1767" y="241" fill="#26380a">Y</text>
              <text x="1720" y="261" fill="#4d0c1e">X</text>
            </g>
          </svg>

          <div class="vp-header">
            <span class="hbtn dark ed"><Ico n="view3d" :s="21" /><i class="chev"></i></span>
            <span class="hbtn dark mode"><Ico n="editmode" :s="20" /><span class="lbl">Edit Mode</span><i class="chev end"></i></span>
            <span class="seg selmode">
              <span class="sbtn on"><Ico n="svert" :s="20" /></span>
              <span class="sbtn"><Ico n="sedge" :s="20" /></span>
              <span class="sbtn"><Ico n="sface" :s="20" /></span>
            </span>
            <span v-for="m in vpMenus" :key="m" class="vp-menu">{{ m }}</span>
            <span class="hbtn dark uv"><Ico n="uv" :s="18" /><i class="chev"></i></span>
            <span class="hbtn dark glob"><Ico n="global" :s="20" /><span class="lbl">Global</span><i class="chev end"></i></span>
            <span class="hbtn dark piv"><Ico n="pivot" :s="20" /><i class="chev"></i></span>
            <span class="seg snapg"><span class="sbtn tog w26"><Ico n="snap" :s="20" /></span><span class="sbtn dk2 w39"><Ico n="snapinc" :s="18" /><i class="chev"></i></span></span>
            <span class="seg propg"><span class="sbtn tog w27"><Ico n="prop" :s="20" /></span><span class="sbtn grey w39"><Ico n="fall" :s="19" /><i class="chev dim"></i></span></span>
            <div class="hdr-right">
              <span class="hbtn dark vw"><Ico n="view" :s="21" /><i class="chev"></i></span>
              <span class="seg gz"><span class="sbtn on w24"><Ico n="gizmo" :s="20" /></span><span class="sbtn dk2 w26"><i class="chev"></i></span></span>
              <span class="seg gz"><span class="sbtn on w24"><Ico n="overlay" :s="20" /></span><span class="sbtn dk2 w26"><i class="chev"></i></span></span>
              <span class="seg xr"><span class="sbtn w24"><Ico n="xray" :s="20" /></span></span>
              <span class="seg shad">
                <span v-for="(s, i) in shading" :key="s" class="sbtn w25" :class="{ on: i === 1 }"><Ico :n="s" :s="20" /></span>
                <span class="sbtn dk2 w25"><i class="chev"></i></span>
              </span>
            </div>
          </div>

          <div class="tool-row">
            <span class="tool-name">Select Box</span>
            <span class="seg selsets">
              <span class="sbtn on w25"><Ico n="selset" :s="18" /></span>
              <span class="sbtn w25"><Ico n="selext" :s="18" /></span>
              <span class="sbtn w25"><Ico n="selsub" :s="18" /></span>
              <span class="sbtn w25"><Ico n="seldif" :s="18" /></span>
              <span class="sbtn w25"><Ico n="selint" :s="18" /></span>
            </span>
            <div class="tool-right">
              <Ico n="mirror" :s="20" />
              <span class="seg xyz"><span>X</span><span>Y</span><span>Z</span></span>
              <span class="seg fallbox"><Ico n="falloff" :s="18" /></span>
              <span class="options">Options<i class="chev"></i></span>
            </div>
          </div>

          <div class="toolbar">
            <div v-for="(g, i) in toolGroups" :key="i" class="tgroup">
              <div v-for="t in g" :key="t.n" class="tbtn" :class="{ on: t.on, corner: t.c }"><Ico :n="t.n" :s="30" /></div>
            </div>
          </div>

          <div class="stats">
            <div>User Perspective</div>
            <div>(1) Plane</div>
            <dl class="stat-rows">
              <template v-for="s in stats" :key="s[0]">
                <dt>{{ s[0] }}</dt>
                <dd>{{ s[1] }}</dd>
              </template>
            </dl>
          </div>

          <div class="navs">
            <span v-for="b in navBtns" :key="b" class="nav"><Ico :n="b" :s="24" /></span>
          </div>
          <span class="side-arrow"></span>
        </div>

        <div class="timeline">
          <div class="tl-header">
            <span class="hbtn dark tl-ed"><Ico n="timeline" :s="20" /><i class="chev"></i></span>
            <span class="seg tl-menus"><span>Playback<i class="chev"></i></span><span>Keying<i class="chev"></i></span></span>
            <span class="tl-menu">View</span>
            <span class="tl-menu">Marker</span>
            <div class="tl-center">
              <span class="seg autokey"><span class="sbtn tog w25"><Ico n="record" :s="20" /></span><span class="sbtn grey w26"><i class="chev dim"></i></span></span>
              <span class="seg trans"><span v-for="t in transport" :key="t" class="sbtn w26"><Ico :n="t" :s="18" /></span></span>
            </div>
            <div class="tl-right">
              <span class="num-field cur">1</span>
              <span class="seg range">
                <span class="rg-ic"><Ico n="stopwatch" :s="20" /></span>
                <span class="rg start"><span>Start</span><span>1</span></span>
                <span class="rg end"><span>End</span><span>250</span></span>
              </span>
            </div>
          </div>
          <div class="ruler">
            <span v-for="f in frames" :key="f" class="tick">{{ f }}</span>
          </div>
          <div class="tracks">
            <span class="scrollbar"><i></i><i></i></span>
          </div>
          <span class="badge">1</span>
          <span class="playhead"></span>
          <span class="edge-l"></span>
          <span class="edge-r"></span>
        </div>
      </div>

      <div class="props">
        <div class="pane-head">
          <span class="hbtn dark ph-ed"><Ico n="swap" :s="20" /><i class="chev"></i></span>
          <span class="search ph-search"><Ico n="search" :s="20" /></span>
          <span class="hbtn dark ph-opt"><i class="chev"></i></span>
        </div>
        <div class="props-body">
          <div class="ptabs">
            <div v-for="(g, i) in tabGroups" :key="i" class="pgroup">
              <span v-for="t in g" :key="t" class="ptab" :class="{ on: t === 'wrench' }"><Ico :n="t" :s="22" /></span>
            </div>
          </div>
          <div class="pmain">
            <div class="crumb">
              <Ico n="planeobj" :s="20" />
              <span>Plane</span>
              <Ico class="pin" n="pin" :s="20" />
            </div>
            <div class="addmod">Add Modifier<i class="chev"></i></div>
          </div>
        </div>
      </div>

      <div class="outliner">
        <div class="pane-head">
          <span class="hbtn dark oh1"><Ico n="outl" :s="20" /><i class="chev"></i></span>
          <span class="hbtn dark oh1 oh2"><Ico n="layer" :s="20" /><i class="chev"></i></span>
          <span class="search oh-search"><Ico n="search" :s="20" /></span>
          <span class="hbtn dark oh1 oh3"><Ico n="filter" :s="20" /><i class="chev"></i></span>
          <span class="oh-new"><Ico n="newcoll" :s="20" /></span>
        </div>
        <div class="tree">
          <div class="row r-scene"><Ico n="sccoll" :s="19" /><span class="rtxt">Scene Collection</span></div>
          <div class="row alt r-coll">
            <Ico n="arrowd" :s="11" />
            <span class="chip"><Ico n="sccoll" :s="19" /></span>
            <span class="rtxt">Collection</span>
            <span class="row-end"><Ico n="check" :s="14" /><Ico n="eye" :s="18" /><Ico n="cam" :s="18" /></span>
          </div>
          <div v-for="r in outRows" :key="r.name" class="row r-obj" :class="{ sel: r.sel, alt: r.alt }">
            <Ico v-if="r.sel" class="modeic" n="editmode" :s="19" />
            <Ico n="arrowr" :s="11" />
            <span :class="['oicon', { chip: r.sel }]"><Ico :n="r.icon" :s="21" /></span>
            <span class="oname rtxt">{{ r.name }}</span>
            <span :class="['odata', { chip: r.boxed }]"><Ico :n="r.data" :s="19" /></span>
            <span class="row-end"><Ico n="eye" :s="18" /><Ico n="cam" :s="18" /></span>
          </div>
          <span class="tree-line"></span>
        </div>
      </div>
    </div>

    <div class="statusbar">
      <span class="st s1"><Ico n="mL" :s="19" />Select</span>
      <span class="st s2"><Ico n="mD" :s="19" />Box Select</span>
      <span class="st s3"><Ico n="mM" :s="19" />Rotate View</span>
      <span class="st s4"><Ico n="mR" :s="19" />Call Menu</span>
      <span class="version">3.0.0 Alpha</span>
    </div>
  </div>
</template>

<style>
html, body { margin: 0; background: #000; }
</style>

<style scoped>
.screen {
  width: 2560px;
  height: 1440px;
  display: flex;
  flex-direction: column;
  background: #000;
  overflow: hidden;
  font-family: Inter, "Liberation Sans", sans-serif;
  font-size: 13.4px;
  color: #e0e0e0;
}
.ico { display: block; flex: none; }
i { display: block; font-style: normal; }

.sysbar {
  height: 32px;
  display: flex;
  align-items: center;
  padding: 0 0 1px 8px;
  box-sizing: border-box;
  color: #fff;
  font-size: 14px;
  flex: none;
}
.sys-logo { margin-left: 23px; }
.sys-app { margin-left: 5px; font-weight: 500; }
.tray { margin-left: auto; display: flex; align-items: center; padding-right: 23px; }
.tray .ico { margin-right: 22px; }
.tray .ico:nth-child(2) { margin-right: 16px; }
.tray .ico:nth-child(3) { margin-right: 19px; }
.clock { margin-left: 19px; color: #f0f0f0; font-weight: 500; font-size: 15.4px; }

.titlebar {
  height: 36px;
  flex: none;
  background: #2c2c2c;
  border-radius: 10px 10px 0 0;
  border-bottom: 1px solid #000;
  display: flex;
  align-items: center;
  justify-content: center;
  position: relative;
}
.title { color: #f2f2f2; font-weight: 700; font-size: 14px; }
.win-btns { position: absolute; right: 13px; top: 10px; display: flex; gap: 27px; color: #eee; font-size: 14px; }
.win-btns .min { width: 9px; height: 2px; background: #eee; margin-top: 11px; }

.topbar {
  height: 34px;
  flex: none;
  background: #1f1f1f;
  display: flex;
  align-items: center;
  padding-left: 12px;
}
.bl-logo { margin-right: 12px; margin-top: -1px; }
.top-menu { margin-right: 18.6px; color: #e6e6e6; margin-top: -3px; }
.tabs { display: flex; gap: 2px; align-self: flex-end; margin-left: 10px; }
.tab {
  height: 27px;
  padding: 0 11.55px 2px;
  box-sizing: border-box;
  display: flex;
  align-items: center;
  background: #2c2c2c;
  color: #a2a2a2;
  border-radius: 5px 5px 0 0;
}
.tab.on { background: #3d3d3d; color: #f0f0f0; }
.tab.plus { font-size: 18px; padding: 0 6px 2px; }
.scene-fields { margin-left: auto; display: flex; gap: 7px; padding-right: 10px; }
.idfield {
  display: flex;
  height: 25px;
  align-items: stretch;
  border: 1px solid #3a3a3a;
  border-radius: 5px;
  overflow: hidden;
}
.id-ic { width: 39px; display: flex; align-items: center; gap: 2px; padding-left: 4px; box-sizing: border-box; background: #282828; border-right: 1px solid #3a3a3a; }
.id-name { width: 155px; background: #1d1d1d; padding-left: 9px; box-sizing: border-box; display: flex; align-items: center; }
.id-copy { width: 26px; background: #545454; display: flex; align-items: center; justify-content: center; }
.id-x { width: 26px; background: #3a3a3a; display: flex; align-items: center; justify-content: center; }

.chev {
  width: 6px;
  height: 6px;
  flex: none;
  margin-left: 3px;
  border-right: 1.5px solid #ddd;
  border-bottom: 1.5px solid #ddd;
  transform: rotate(45deg) translate(-2px, -2px) scale(0.9);
  box-sizing: border-box;
}
.chev.dim { border-color: #7c7c7c; }
.chev.end { margin-left: auto; margin-right: 4px; }

.work {
  flex: 1;
  min-height: 0;
  display: flex;
  background: #1c1c1c;
  gap: 3px;
}
.left { width: 1791px; display: flex; flex-direction: column; gap: 3px; }

.viewport {
  height: 1209px;
  position: relative;
  background: #3d3d3d;
  border-radius: 0 8px 8px 0;
  overflow: hidden;
}
.scene { position: absolute; left: 0; top: 0; width: 100%; height: 100%; }

.vp-header {
  position: relative;
  height: 32px;
  display: flex;
  align-items: center;
  padding-left: 12px;
  background: rgba(70, 70, 70, 0.55);
}
.hbtn {
  height: 25px;
  display: flex;
  align-items: center;
  padding: 0 4px;
  box-sizing: border-box;
  border-radius: 5px;
}
.hbtn.dark { background: #2a2a2a; box-shadow: 0 1px 0 #252525; }
.lbl { margin-left: 6px; }
.ed { width: 39px; }
.mode { width: 141px; margin-left: 8px; }
.seg { display: flex; border-radius: 5px; overflow: hidden; height: 25px; align-items: stretch; }
.sbtn {
  display: flex;
  align-items: center;
  justify-content: center;
  background: #545454;
  padding: 0 2px;
  min-width: 24px;
  box-sizing: border-box;
  border-left: 1px solid #3d3d3d;
}
.sbtn:first-child { border-left: 0; }
.sbtn.on { background: #4772b3; }
.sbtn.tog { background: #545454; }
.sbtn.dk2 { background: #2a2a2a; border-left: 0; }
.sbtn.grey { background: #3f3f3f; border-left: 0; }
.w24 { width: 24px; }
.w25 { width: 25px; }
.w26 { width: 26px; }
.w27 { width: 27px; }
.w39 { width: 39px; }
.selmode { margin-left: 8px; }
.vp-menu { margin-left: 18px; color: #e4e4e4; }
.uv { margin-left: 14px; width: 40px; }
.glob { width: 103px; margin-left: 20px; }
.piv { margin-left: 7px; width: 38px; }
.snapg { margin-left: 9px; }
.propg { margin-left: 7px; }
.hdr-right { margin-left: auto; display: flex; align-items: center; padding-right: 11px; gap: 8px; }
.vw { width: 39px; }

.tool-row {
  position: relative;
  height: 36px;
  display: flex;
  align-items: center;
  padding-left: 11px;
}
.tool-name { color: #e6e6e6; margin-right: 12px; text-shadow: 0 1px 1px rgba(0, 0, 0, 0.5); }
.selsets { height: 24px; }
.tool-right { margin-left: auto; display: flex; align-items: center; padding-right: 10px; }
.xyz { margin-left: 4px; height: 24px; background: #545454; }
.xyz span { width: 20px; display: flex; align-items: center; justify-content: center; border-left: 1px solid #3d3d3d; }
.xyz span:first-child { border-left: 0; width: 21px; }
.fallbox { margin-left: 8px; width: 24px; height: 24px; background: #545454; align-items: center; justify-content: center; }
.options {
  margin-left: 8px;
  width: 79px;
  height: 24px;
  box-sizing: border-box;
  background: #2a2a2a;
  border-radius: 5px;
  display: flex;
  align-items: center;
  padding-left: 8px;
  gap: 5px;
}

.toolbar {
  position: absolute;
  left: 11px;
  top: 77px;
  width: 52px;
  display: flex;
  flex-direction: column;
  gap: 6.5px;
}
.tgroup { background: #2a2a2a; border-radius: 6px; overflow: hidden; }
.tbtn {
  height: 44.8px;
  display: flex;
  align-items: center;
  justify-content: center;
  position: relative;
}
.tbtn + .tbtn { box-shadow: 0 -1px 0 #333; }
.tbtn.on { background: #4772b3; }
.tbtn.corner::after {
  content: "";
  position: absolute;
  right: 3px;
  bottom: 3px;
  border-left: 5px solid transparent;
  border-bottom: 5px solid #a0a0a0;
}

.stats {
  position: absolute;
  left: 86px;
  top: 77px;
  line-height: 23px;
  color: #f0f0f0;
  text-shadow: 0 1px 2px rgba(0, 0, 0, 0.75);
}
.stat-rows {
  margin: 15px 0 0;
  display: grid;
  grid-template-columns: 69px auto;
}
.stat-rows dd { margin: 0; }

.navs {
  position: absolute;
  left: 1744px;
  top: 183px;
  display: flex;
  flex-direction: column;
  gap: 2.5px;
}
.nav {
  width: 36px;
  height: 36px;
  border-radius: 50%;
  background: rgba(35, 35, 35, 0.45);
  display: flex;
  align-items: center;
  justify-content: center;
}
.side-arrow {
  position: absolute;
  right: 0;
  top: 84px;
  width: 11px;
  height: 22px;
  background: #343434;
  border-radius: 4px 0 0 4px;
}
.side-arrow::after {
  content: "";
  position: absolute;
  left: 4px;
  top: 7px;
  width: 6px;
  height: 6px;
  border-left: 1.5px solid #bbb;
  border-bottom: 1.5px solid #bbb;
  transform: rotate(45deg);
  box-sizing: border-box;
}

.timeline {
  height: 98px;
  position: relative;
  background: #3d3d3d;
  border-radius: 0 8px 8px 0;
  overflow: hidden;
}
.tl-header { height: 32px; display: flex; align-items: center; padding-left: 10px; }
.tl-ed { width: 40px; }
.tl-menus { margin-left: 8px; background: #353535; box-shadow: inset 0 0 0 1px #2f2f2f; width: 159px; }
.tl-menus span { display: flex; align-items: center; gap: 6px; padding-left: 9px; box-sizing: border-box; border-left: 1px solid #2f2f2f; }
.tl-menus span:first-child { border-left: 0; width: 84px; }
.tl-menus span:last-child { width: 75px; }
.tl-menu { margin-left: 12px; color: #e4e4e4; }
.tl-menu + .tl-menu { margin-left: 19px; }
.tl-center { position: absolute; left: 776px; top: 4px; display: flex; gap: 7px; }
.tl-right { margin-left: auto; display: flex; padding-right: 10px; gap: 8px; }
.num-field {
  width: 94px;
  height: 25px;
  background: #545454;
  border-radius: 5px;
  display: flex;
  align-items: center;
  justify-content: center;
}
.range { width: 245px; background: #545454; }
.rg-ic { width: 25px; display: flex; align-items: center; justify-content: center; border-right: 1px solid #3d3d3d; }
.rg { display: flex; align-items: center; justify-content: space-between; box-sizing: border-box; }
.rg.start { width: 111px; padding: 0 16px 0 20px; border-right: 1px solid #3d3d3d; }
.rg.end { width: 109px; padding: 0 20px 0 20px; }

.ruler {
  height: 30px;
  background: #2b2b2b;
  display: flex;
  align-items: center;
  padding: 2px 0 0 92.7px;
  box-sizing: border-box;
  color: #b0b0b0;
}
.tick { width: 66.58px; flex: none; text-align: center; }
.tracks {
  height: 36px;
  position: relative;
  background-color: #3d3d3d;
  background-image:
    linear-gradient(90deg, rgba(0, 0, 0, 0.14) 66px, transparent 66px, transparent 1724px, rgba(0, 0, 0, 0.14) 1724px),
    repeating-linear-gradient(90deg, #222 0, #222 1px, transparent 1px, transparent 66.58px),
    repeating-linear-gradient(90deg, #303030 0, #303030 1px, transparent 1px, transparent 33.29px);
  background-position: 0 0, 126px 0, 126px 0;
}
.scrollbar {
  position: absolute;
  left: 11px;
  right: 12px;
  bottom: 2px;
  height: 13px;
  background: #6b6b6b;
  border: 1px solid #4c4c4c;
  border-radius: 7px;
  box-sizing: border-box;
  display: flex;
  justify-content: space-between;
  align-items: center;
  padding: 0 1px;
  box-shadow: 0 0 0 1px #333;
}
.scrollbar i { width: 8px; height: 9px; border-radius: 50%; background: #454545; }
.badge {
  position: absolute;
  left: 51px;
  top: 36px;
  width: 31px;
  height: 22px;
  background: #4772b3;
  border-radius: 6px;
  display: flex;
  align-items: center;
  justify-content: center;
  color: #fff;
}
.playhead { position: absolute; left: 66px; top: 58px; width: 2px; height: 40px; background: #4772b3; }
.edge-l, .edge-r {
  position: absolute;
  top: 52px;
  width: 9px;
  height: 18px;
  background: #2a2a2a;
}
.edge-l { left: 0; border-radius: 0 4px 4px 0; }
.edge-r { right: 0; border-radius: 4px 0 0 4px; }

.props { width: 386px; display: flex; flex-direction: column; background: #3d3d3d; border-radius: 8px 8px 0 0; overflow: hidden; }
.pane-head { height: 32px; flex: none; background: #303030; display: flex; align-items: center; padding-left: 11px; }
.ph-ed { width: 39px; }
.ph-search { margin-left: 70px; width: 142px; }
.ph-opt { margin-left: 88px; width: 25px; justify-content: center; }
.search {
  height: 24px;
  background: #1f1f1f;
  border-radius: 5px;
  display: flex;
  align-items: center;
  padding-left: 4px;
  box-sizing: border-box;
}
.props-body { flex: 1; display: flex; min-height: 0; }
.ptabs {
  width: 36px;
  flex: none;
  background: #282828;
  padding: 11px 0 0 2px;
  box-sizing: border-box;
  display: flex;
  flex-direction: column;
  gap: 11.5px;
}
.pgroup { display: flex; flex-direction: column; gap: 2px; }
.ptab {
  height: 34px;
  background: #303030;
  border-radius: 6px 0 0 6px;
  display: flex;
  align-items: center;
  justify-content: center;
}
.ptab.on { background: #3d3d3d; }
.pmain { flex: 1; padding: 11px 11px 0 11px; }
.crumb { display: flex; align-items: center; gap: 10px; height: 24px; padding-left: 3px; color: #e8e8e8; }
.pin { margin-left: auto; margin-right: 1px; }
.addmod {
  margin-top: 22px;
  height: 24px;
  background: #2a2a2a;
  border-radius: 5px;
  display: flex;
  align-items: center;
  justify-content: space-between;
  padding: 0 5px 0 9px;
  color: #e6e6e6;
}

.outliner { flex: 1; display: flex; flex-direction: column; background: #282828; border-radius: 8px 0 0 0; overflow: hidden; }
.outliner .pane-head { padding-left: 10px; background: #303030; }
.oh1 { width: 40px; }
.oh2 { margin-left: 7px; }
.oh-search { margin-left: 20px; width: 142px; }
.oh3 { margin-left: 36px; }
.oh-new { margin-left: 9px; width: 24px; height: 25px; background: #545454; border-radius: 5px; display: flex; align-items: center; justify-content: center; }
.tree { position: relative; padding-top: 2px; }
.row { height: 26px; display: flex; align-items: center; color: #c6c6c6; position: relative; }
.alt { background: #2d2d2d; }
.rtxt { position: relative; top: 1.5px; }
.r-scene { padding-left: 29px; gap: 8px; }
.r-coll { padding-left: 32px; }
.chip { width: 25px; height: 24px; background: #4f4f4f; border-radius: 6px; display: flex; align-items: center; justify-content: center; margin: 0 6px 0 0; }
.r-coll .chip { margin-left: 9px; }
.row-end { position: absolute; right: 14px; display: flex; align-items: center; gap: 8px; }
.r-obj { padding-left: 58px; }
.oicon { width: 25px; height: 24px; margin-left: 8px; display: flex; align-items: center; justify-content: center; }
.oname { margin-left: 6px; min-width: 34px; }
.odata { width: 25px; height: 24px; margin-left: 24px; display: flex; align-items: center; justify-content: center; }
.odata.chip { margin-right: 0; background: #505050; }
.row.sel { background: #3a5588; }
.row.sel .oname { color: #ffaf29; }
.row.sel .oicon.chip { background: #5b7199; margin-right: 0; }
.row.sel .odata.chip { background: #2e5a7c; }
.modeic { position: absolute; left: 4px; }
.tree-line { position: absolute; left: 38px; top: 60px; width: 1px; height: 65px; background: #555; }

.statusbar {
  height: 26px;
  flex: none;
  background: #2c2c2c;
  position: relative;
  display: flex;
  align-items: center;
  color: #b4b4b4;
}
.st { display: flex; align-items: center; gap: 12px; }
.s1 { margin-left: 12px; }
.s2 { margin-left: 15px; }
.s3 { margin-left: 32px; }
.s4 { margin-left: 105px; }
.version { margin-left: auto; padding-right: 10px; }
</style>
